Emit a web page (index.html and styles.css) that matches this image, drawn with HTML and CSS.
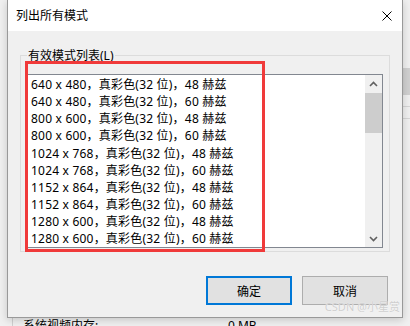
FILE: index.html
```html
<!DOCTYPE html>
<html lang="zh-CN">
<head>
  <meta charset="UTF-8" />
  <title>列出所有模式</title>
  <link rel="stylesheet" href="styles.css">
</head>
<body>
  <div class="desk">
    <div class="dialog">
      <div class="titlebar">
        <span class="title">列出所有模式</span>
        <svg class="close" width="10" height="10" viewBox="0 0 10 10">
          <path d="M0.5 0.5L9.5 9.5M9.5 0.5L0.5 9.5" stroke="#000" stroke-width="1" fill="none" />
        </svg>
      </div>

      <div class="content">
        <fieldset class="group">
          <legend>有效模式列表(L)</legend>
          <div class="listbox">
            <ul class="modes">
              <li>640 x 480，真彩色(32 位)，48 赫兹</li>
              <li>640 x 480，真彩色(32 位)，60 赫兹</li>
              <li>800 x 600，真彩色(32 位)，48 赫兹</li>
              <li>800 x 600，真彩色(32 位)，60 赫兹</li>
              <li>1024 x 768，真彩色(32 位)，48 赫兹</li>
              <li>1024 x 768，真彩色(32 位)，60 赫兹</li>
              <li>1152 x 864，真彩色(32 位)，48 赫兹</li>
              <li>1152 x 864，真彩色(32 位)，60 赫兹</li>
              <li>1280 x 600，真彩色(32 位)，48 赫兹</li>
              <li>1280 x 600，真彩色(32 位)，60 赫兹</li>
            </ul>
            <div class="scrollbar">
              <span class="arrow">
                <svg width="9" height="6" viewBox="0 0 9 6"><path d="M1 5L4.5 1.5L8 5" stroke="#606060" stroke-width="1.6" fill="none" /></svg>
              </span>
              <span class="track"><span class="thumb"></span></span>
              <span class="arrow">
                <svg width="9" height="6" viewBox="0 0 9 6"><path d="M1 1L4.5 4.5L8 1" stroke="#606060" stroke-width="1.6" fill="none" /></svg>
              </span>
            </div>
          </div>
        </fieldset>

        <div class="actions">
          <button class="btn default">确定</button>
          <button class="btn">取消</button>
        </div>
      </div>

      <div class="mark"></div>
      <div class="watermark">CSDN @小星赏</div>
    </div>

    <div class="side">
      <div class="side-top"></div>
      <div class="side-bar"></div>
      <div class="side-line"></div>
      <div class="side-line"></div>
    </div>
  </div>

  <div class="behind">
    <span class="behind-label">系统视频内存:</span>
    <span>0 MB</span>
  </div>
</body>
</html>
```

FILE: styles.css
```css
body {
  margin: 0;
  background-color: #f0f0f0;
  font-family: "Noto Sans", "Noto Sans CJK SC", sans-serif;
  font-size: 12px;
  color: #000;
  overflow: hidden;
}
.desk {
  display: flex;
}
.dialog {
  position: relative;
  width: 396px;
  margin-left: 7px;
  box-sizing: border-box;
  border: 1px solid #999;
  border-top: none;
  background-color: #f0f0f0;
  box-shadow: 0 2px 8px rgba(0,0,0,0.18);
}
.titlebar {
  height: 31px;
  background-color: #fff;
  display: flex;
  align-items: center;
  justify-content: space-between;
  padding: 0 10px 0 8px;
}
.title {
  line-height: 16px;
}
.close {
  display: block;
}
.content {
  padding: 16px 12px 12px 12px;
}
.group {
  margin: 0;
  min-width: 0;
  padding: 10px 6px 3px 6px;
  border: 1px solid #dcdcdc;
}
.group legend {
  padding: 0 1px;
  line-height: 17px;
}
.listbox {
  display: flex;
  height: 174px;
  box-sizing: border-box;
  border: 1px solid #828790;
  background-color: #fff;
}
.modes {
  flex: 1;
  margin: 0;
  padding: 1px 0 0 3px;
  list-style: none;
  overflow: hidden;
  line-height: 17.15px;
  letter-spacing: 0.2px;
  white-space: nowrap;
}
.scrollbar {
  width: 17px;
  display: flex;
  flex-direction: column;
  background-color: #f0f0f0;
}
.arrow {
  height: 17px;
  display: flex;
  align-items: center;
  justify-content: center;
}
.arrow svg {
  display: block;
}
.track {
  flex: 1;
}
.thumb {
  display: block;
  height: 40px;
  margin-top: 1px;
  background-color: #cdcdcd;
}
.actions {
  display: flex;
  justify-content: flex-end;
  gap: 10px;
  margin-top: 24px;
  padding-right: 2px;
}
.btn {
  width: 86px;
  height: 29px;
  box-sizing: border-box;
  border: 1px solid #adadad;
  background-color: #e1e1e1;
  font-family: inherit;
  font-size: 12px;
  color: #000;
  padding: 0;
}
.btn.default {
  border: 2px solid #0078d7;
}
.mark {
  position: absolute;
  left: 17px;
  top: 61px;
  width: 240px;
  height: 191px;
  box-sizing: border-box;
  border: 3px solid #f03a3a;
}
.watermark {
  position: absolute;
  right: 2px;
  bottom: 4px;
  font-size: 11px;
  line-height: 12px;
  color: #cfcfcf;
  text-shadow: 0 0 1px #fff;
  white-space: nowrap;
}
.side {
  flex: 1;
  display: flex;
  flex-direction: column;
}
.side-top {
  height: 68px;
}
.side-bar {
  height: 27px;
  background-color: #d0d0d0;
}
.side-line {
  height: 1px;
  margin-top: 11px;
  background-color: #d6d6d6;
}
.behind {
  display: flex;
  margin-left: 12px;
  padding-left: 10px;
  border-left: 1px solid #d0d0d0;
  line-height: 16px;
}
.behind-label {
  width: 205px;
}
```
